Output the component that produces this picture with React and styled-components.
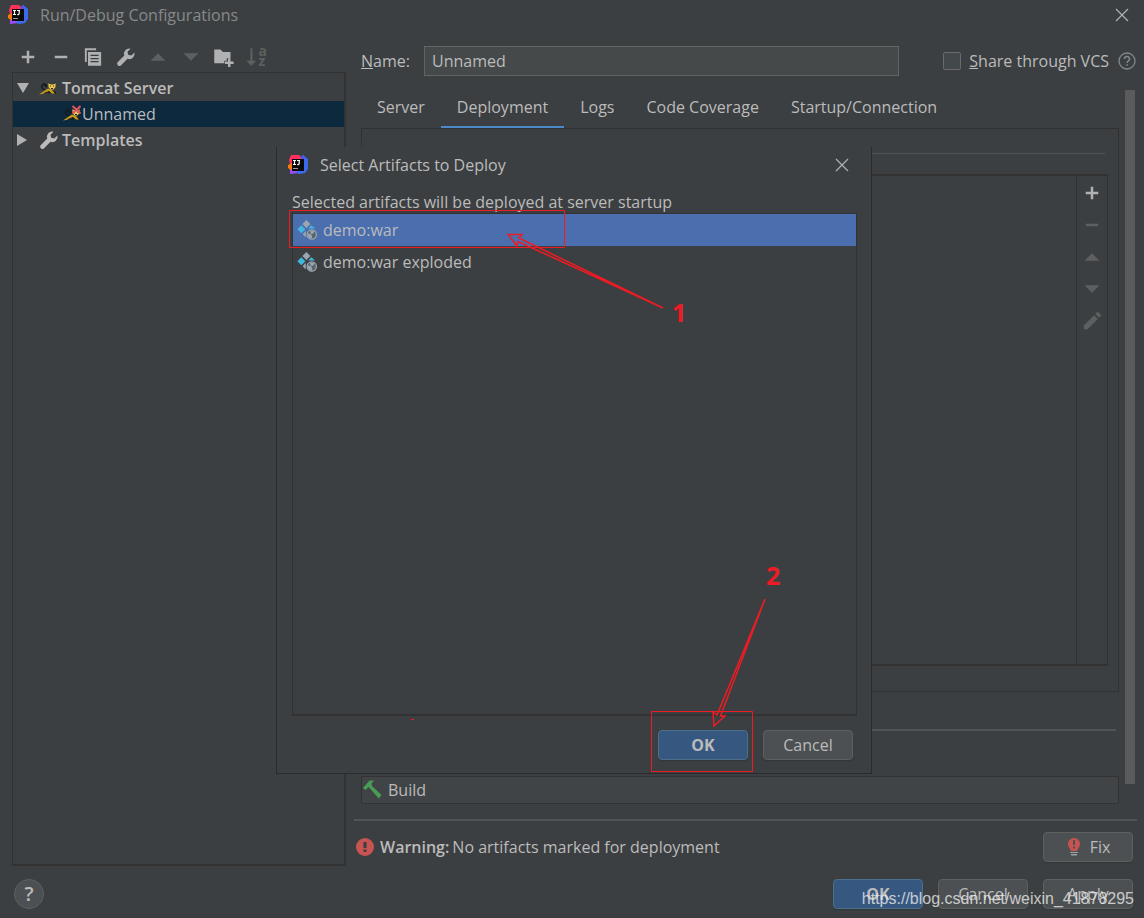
import React from "react";
import styled, { createGlobalStyle } from "styled-components";

const GlobalStyle = createGlobalStyle`
  * {
    box-sizing: border-box;
  }

  body {
    margin: 0;
    background: #3c3f41;
    color: #bbbbbb;
    font-family: "Open Sans", "Noto Sans", sans-serif;
    font-size: 16px;
    line-height: 22px;
  }

  b {
    font-weight: 600;
  }

  button,
  input {
    font: inherit;
    color: inherit;
  }

  svg {
    display: block;
    flex: none;
  }
`;

const Window = styled.div`
  position: relative;
  display: flex;
  flex-direction: column;
  min-height: 100vh;
  overflow: hidden;
`;

const TitleBar = styled.header`
  display: flex;
  align-items: center;
  height: ${(props) => (props.$dialog ? "36px" : "30px")};
  padding: 0 ${(props) => (props.$dialog ? "22px 0 11px" : "15px 0 8px")};
  gap: 12px;
  color: ${(props) => (props.$dialog ? "#bbbbbb" : "#87898a")};
`;

const Title = styled.h1`
  flex: 1;
  margin: 0;
  font-size: 16px;
  font-weight: 400;
`;

const IconButton = styled.button`
  display: flex;
  align-items: center;
  justify-content: center;
  padding: 0;
  border: none;
  background: none;
  color: #afb1b3;

  &:disabled {
    color: #5d5f60;
  }
`;

const Main = styled.main`
  flex: 1;
  display: grid;
  grid-template-columns: 334px minmax(0, 1fr);
  column-gap: 8px;
  padding-left: 12px;
`;

const Sidebar = styled.aside`
  display: flex;
  flex-direction: column;
  padding-top: 12px;
`;

const Toolbar = styled.div`
  display: flex;
  align-items: center;
  justify-content: space-between;
  height: 30px;
  padding: 0 80px 0 6px;
`;

const Tree = styled.ul`
  flex: 1;
  margin: 0;
  padding: 2px 0 0;
  list-style: none;
  border: 1px solid #323232;
  border-width: 1px 2px 2px 1px;
`;

const TreeRow = styled.li`
  display: flex;
  align-items: center;
  height: 26px;
  padding-left: ${(props) => (props.$child ? "50px" : "3px")};
  font-weight: ${(props) => (props.$child ? 400 : 600)};
  background: ${(props) => (props.$selected ? "#0d293e" : "none")};
`;

const Twisty = styled.span`
  width: 23px;
`;

const TreeIcon = styled.span`
  width: ${(props) => (props.$child ? "19px" : "23px")};
`;

const Content = styled.section`
  display: flex;
  flex-direction: column;
`;

const NameRow = styled.div`
  display: flex;
  align-items: center;
  height: 60px;
  padding: 2px 8px 0 7px;
`;

const NameLabel = styled.label`
  width: 63px;
`;

const NameInput = styled.input`
  flex: 1;
  min-width: 0;
  height: 30px;
  margin-right: 44px;
  padding: 0 7px;
  border: 1px solid #646464;
  background: #45494a;
  outline: none;
`;

const ShareLabel = styled.label`
  display: flex;
  align-items: center;
  gap: 8px;
  margin-right: 9px;
`;

const Checkbox = styled.input`
  appearance: none;
  width: 18px;
  height: 18px;
  margin: 0;
  border: 1px solid #6b6b6b;
  border-radius: 2px;
  background: #43494a;
`;

const Scroller = styled.div`
  flex: 1;
  display: flex;
  gap: 6px;
  padding: 0 9px 0 7px;
`;

const ScrollBody = styled.div`
  flex: 1;
  display: flex;
  flex-direction: column;
`;

const ScrollThumb = styled.div`
  width: 10px;
  margin: 0 0 20px;
  background: #595b5d;
`;

const Tabs = styled.nav`
  display: flex;
  height: 38px;
`;

const Tab = styled.button`
  height: 39px;
  padding: 0 16px 2px;
  border: none;
  border-bottom: 3px solid
    ${(props) => (props.$active ? "#4a88c7" : "transparent")};
  background: none;
`;

const Panel = styled.div`
  flex: 1;
  display: flex;
  flex-direction: column;
  padding: 24px 10px 25px;
  border: 1px solid #323232;
`;

const Rule = styled.hr`
  width: auto;
  height: ${(props) => (props.$thick ? "2px" : "1px")};
  margin: 0 3px 0 0;
  border: none;
  background: #515355;
`;

const ArtifactBox = styled.div`
  flex: 1;
  display: flex;
  justify-content: flex-end;
  margin-top: 20px;
  border: 1px solid #323232;
  border-width: 2px 1px 2px 1px;
`;

const ArtifactTools = styled.div`
  display: flex;
  flex-direction: column;
  width: 31px;
  padding-top: 1px;
  border-left: 1px solid #323232;

  ${IconButton} {
    height: 32px;
  }
`;

const BeforeLaunch = styled.div`
  padding: 37px 0 45px;
`;

const BuildRow = styled.div`
  display: flex;
  align-items: center;
  gap: 4px;
  height: 28px;
  border: 1px solid #323232;
  background: #414446;
`;

const Problem = styled.div`
  display: flex;
  align-items: center;
  margin: 15px 7px 0 0;
  padding: 11px 4px 4px 2px;
  border-top: 2px solid #515355;
`;

const ProblemText = styled.p`
  flex: 1;
  display: flex;
  gap: 3px;
  margin: 0 0 0 6px;
`;

const Button = styled.button`
  display: flex;
  align-items: center;
  justify-content: center;
  gap: 8px;
  width: 90px;
  height: 30px;
  padding: 0;
  border: 1px solid ${(props) => (props.$primary ? "#4c708c" : "#5e6060")};
  border-radius: 4px;
  background: ${(props) => (props.$primary ? "#365880" : "#4c5052")};
  font-weight: ${(props) => (props.$primary ? 700 : 400)};
  box-shadow: 0 1px 1px rgba(0, 0, 0, 0.15);
`;

const Footer = styled.footer`
  display: flex;
  align-items: center;
  justify-content: flex-end;
  gap: 15px;
  padding: 13px 11px 9px 14px;
`;

const HelpButton = styled.button`
  width: 30px;
  height: 30px;
  margin-right: auto;
  padding: 0;
  border: 1px solid #5e6060;
  border-radius: 50%;
  background: #4c5052;
  font-size: 20px;
  font-weight: 600;
`;

const Overlay = styled.div`
  position: absolute;
  inset: 0;
  display: grid;
  place-items: center;
  padding: 3px 0 0 4px;
`;

const Dialog = styled.div`
  position: relative;
  display: flex;
  flex-direction: column;
  width: 596px;
  height: 627px;
  border: 1px solid #2b2b2b;
  border-top: none;
  background: #3c3f41;
`;

const DialogBody = styled.div`
  flex: 1;
  display: flex;
  flex-direction: column;
  padding: 8px 14px 13px 15px;
`;

const List = styled.ul`
  flex: 1;
  margin: 0 0 14px;
  padding: 0;
  list-style: none;
  border: 1px solid #323232;
  border-bottom-width: 2px;
`;

const ListItem = styled.li`
  display: flex;
  align-items: center;
  gap: 6px;
  height: 32px;
  padding-left: 4px;
  background: ${(props) => (props.$selected ? "#4b6eaf" : "none")};
`;

const DialogButtons = styled.div`
  display: flex;
  justify-content: flex-end;
  gap: 15px;
  padding-right: 4px;
`;

const Marks = styled.svg`
  position: absolute;
  top: 0;
  left: 0;
  fill: none;
  stroke: #ed1c24;
  pointer-events: none;

  text {
    fill: #ed1c24;
    stroke: none;
    font-size: 25px;
    font-weight: 700;
  }
`;

const Watermark = styled.div`
  position: absolute;
  right: 10px;
  bottom: 8px;
  color: rgba(235, 235, 235, 0.8);
  font-family: "Liberation Sans", sans-serif;
  font-size: 16px;
  pointer-events: none;
`;

function Icon({ size = 20, children }) {
  return (
    <svg
      width={size}
      height={size}
      viewBox="0 0 16 16"
      fill="currentColor"
      overflow="visible"
    >
      {children}
    </svg>
  );
}

function IdeaLogo() {
  return (
    <svg width="20" height="20" viewBox="0 0 20 20">
      <path d="M3 0h8l3 3-4 13-7-1-1-6-1-4z" fill="#fe315d" />
      <path d="M0 10l4-2v8l-4-3z" fill="#f97a12" />
      <path d="M2 15l9-1v4l-5 .5-4 .5z" fill="#a24af7" />
      <path d="M13 2l2-2 5 4v10l-3 4-5 1-5-1 4-3z" fill="#3b6aea" />
      <path d="M13 2l2-2 2 1.500V4h-4z" fill="#4b57ef" />
      <rect x="4" y="4" width="12" height="12" fill="#0a0a0a" />
      <path
        d="M5 5.500h3M6.500 5.500v4M5 9.500h3M9 5.500h3M11.200 5.500v3q0 1.200-2 1"
        stroke="#fff"
        strokeWidth="1.200"
        fill="none"
      />
      <path d="M5 13h5v1H5z" fill="#999" />
    </svg>
  );
}

function CloseIcon() {
  return (
    <svg width="14" height="14" viewBox="0 0 14 14" stroke="currentColor">
      <path d="M1 1l12 12M13 1L1 13" strokeWidth="1.2" />
    </svg>
  );
}

const PlusIcon = () => (
  <Icon>
    <path d="M7 3h2v4h4v2H9v4H7V9H3V7h4z" />
  </Icon>
);

const MinusIcon = () => (
  <Icon>
    <path d="M3 7h10v2H3z" />
  </Icon>
);

const CopyIcon = () => (
  <Icon>
    <path d="M1.500 1h9v1.500H3V12H1.500z" />
    <path
      fillRule="evenodd"
      d="M4 4h10.500v11H4zM6 6.200v1h6.500v-1zM6 8.700v1h6.500v-1zM6 11.200v1h6.500v-1z"
    />
  </Icon>
);

const WrenchIcon = () => (
  <Icon>
    <path d="M14.700 4.300L12.300 6.700L9.700 6.200L9.200 3.700L11.600 1.300A4.200 4.200 0 0 0 6.600 6.800L1.300 12.100A1.600 1.600 0 0 0 1.300 14.300L1.700 14.700A1.600 1.600 0 0 0 3.900 14.700L9.200 9.400A4.200 4.200 0 0 0 14.700 4.300Z" />
  </Icon>
);

const UpIcon = () => (
  <Icon>
    <path d="M8 5l6 6H2z" />
  </Icon>
);

const DownIcon = () => (
  <Icon>
    <path d="M8 11l6-6H2z" />
  </Icon>
);

const FolderIcon = () => (
  <Icon>
    <path d="M1 2h5l2 2h6v5h-3v2H9v2H1z" />
    <path d="M12 9h2v2.500h2.500v2H14V16h-2v-2.500H9.500v-2H12z" />
  </Icon>
);

const SortIcon = () => (
  <Icon>
    <path d="M3.500 1h1.700v10h3L4.300 15 .3 11h3.200z" />
    <text x="10" y="7" fontSize="11" fontWeight="700">
      a
    </text>
    <text x="10" y="15" fontSize="11" fontWeight="700">
      z
    </text>
  </Icon>
);

const PencilIcon = () => (
  <Icon>
    <path d="M1.500 11.500L9.700 3.300L12.700 6.300L4.500 14.500H1.500z" />
    <path d="M10.700 2.300L12 1Q12.600.6 13.200 1L15 2.800Q15.400 3.400 15 4L13.700 5.300z" />
  </Icon>
);

function TomcatIcon({ broken }) {
  return (
    <svg width="18" height="18" viewBox="0 0 18 18">
      <path
        d="M6 11Q1 9 3.500 6T8 8M8 8l-3-2M13 12l4 2"
        stroke="#17191a"
        strokeWidth="1.400"
        fill="none"
      />
      <path d="M0 15.500L5 12 9 9.500l4 1.500 3 3.500h-3l-3-2-4 1.500L3 15z" fill="#c79a1b" />
      <path d="M5 14l5-2 2 2-2 .5-1-1-4 1z" fill="#17191a" />
      <path d="M9.500 4l2.500 1.500h2L16.500 4v4l-2 2.500h-3L9.500 8z" fill="#ecc94f" />
      <path
        d="M9.500 3l2 2M17 3l-2 2M11 7h1M14 7h1M12 9.500h2"
        stroke="#2b2a1c"
        strokeWidth="1"
      />
      {broken && (
        <path
          d="M9.500 1l8 7.500M17.500 1l-8 7.500"
          stroke="#e05560"
          strokeWidth="2"
        />
      )}
    </svg>
  );
}

function ArtifactIcon() {
  return (
    <Icon>
      <path d="M7.500 0l3.200 3.200-3.200 3.200-3.200-3.200z" fill="#9aa7b0" />
      <path d="M3.500 4.200l3.200 3.200-3.200 3.200L.3 7.400z" fill="#40b6e0" />
      <path d="M11.500 4.200l3 2.600H8.900z" fill="#40b6e0" />
      <path d="M7 8.500L4.500 11.300 7 14z" fill="#9aa7b0" />
      <circle cx="11.800" cy="11.600" r="3.700" stroke="#9aa7b0" fill="#5a636b" />
      <path
        d="M8.300 10.500l2.500.7 1.400 1.600-.6 2.200-2.400-1zM10.500 8.300l3.700.7-1.300 1.700-1.900.5z"
        fill="#9aa7b0"
      />
    </Icon>
  );
}

function HammerIcon() {
  return (
    <svg width="22" height="20" viewBox="0 0 22 20" fill="#499c54">
      <path d="M1 8l6.500-7.500H12L9.500 3.500 10 6l9.500 9-2.700 3.500L8 8.500 6.500 7 3.500 10z" />
    </svg>
  );
}

function ErrorIcon() {
  return (
    <svg width="18" height="18" viewBox="0 0 18 18">
      <circle cx="9" cy="9" r="9" fill="#c75450" />
      <path d="M7.500 4h3v6h-3zM7.500 11.500h3v2.500h-3z" fill="#3c3f41" />
    </svg>
  );
}

function BulbIcon() {
  return (
    <svg width="16" height="20" viewBox="0 0 16 20">
      <path
        d="M8 1a6 6 0 0 1 6 6c0 3-2 4-3 7H5C4 11 2 10 2 7a6 6 0 0 1 6-6z"
        fill="#c75450"
      />
      <path d="M7 3h2v5H7zM7 9.500h2v2H7z" fill="#4c5052" />
      <path d="M4 15h8v1H4zM5 17h6v1.500H5z" fill="#9aa0a3" />
    </svg>
  );
}

function HintIcon() {
  return (
    <svg width="18" height="18" viewBox="0 0 18 18" fill="none">
      <circle cx="9" cy="9" r="8" stroke="#7f8b91" strokeWidth="1.300" />
      <path
        d="M6.500 7a2.500 2.400 0 1 1 3.700 2C9.300 9.600 9 9.900 9 11M9 12.300v1.500"
        stroke="#7f8b91"
        strokeWidth="1.500"
      />
    </svg>
  );
}

const tabs = [
  "Server",
  "Deployment",
  "Logs",
  "Code Coverage",
  "Startup/Connection",
];

const artifacts = ["demo:war", "demo:war exploded"];

function ConfigTree() {
  return (
    <Sidebar>
      <Toolbar>
        <IconButton aria-label="Add"><PlusIcon /></IconButton>
        <IconButton aria-label="Remove"><MinusIcon /></IconButton>
        <IconButton aria-label="Copy"><CopyIcon /></IconButton>
        <IconButton aria-label="Edit templates"><WrenchIcon /></IconButton>
        <IconButton aria-label="Move up" disabled><UpIcon /></IconButton>
        <IconButton aria-label="Move down" disabled><DownIcon /></IconButton>
        <IconButton aria-label="New folder"><FolderIcon /></IconButton>
        <IconButton aria-label="Sort" disabled><SortIcon /></IconButton>
      </Toolbar>
      <Tree>
        <TreeRow>
          <Twisty>
            <svg width="14" height="14" fill="#afb1b3">
              <path d="M1 2h12L7 12z" />
            </svg>
          </Twisty>
          <TreeIcon><TomcatIcon /></TreeIcon>
          Tomcat Server
        </TreeRow>
        <TreeRow $child $selected>
          <TreeIcon $child><TomcatIcon broken /></TreeIcon>
          Unnamed
        </TreeRow>
        <TreeRow>
          <Twisty>
            <svg width="14" height="14" fill="#afb1b3">
              <path d="M1 1v12l10-6z" />
            </svg>
          </Twisty>
          <TreeIcon><WrenchIcon /></TreeIcon>
          Templates
        </TreeRow>
      </Tree>
    </Sidebar>
  );
}

function ArtifactDialog() {
  return (
    <Overlay>
      <Dialog role="dialog" aria-label="Select Artifacts to Deploy">
        <TitleBar $dialog>
          <IdeaLogo />
          <Title as="h2">Select Artifacts to Deploy</Title>
          <IconButton aria-label="Close dialog"><CloseIcon /></IconButton>
        </TitleBar>
        <DialogBody>
          <div>Selected artifacts will be deployed at server startup</div>
          <List>
            {artifacts.map((name, index) => (
              <ListItem key={name} $selected={index === 0}>
                <ArtifactIcon />
                {name}
              </ListItem>
            ))}
          </List>
          <DialogButtons>
            <Button $primary>OK</Button>
            <Button>Cancel</Button>
          </DialogButtons>
        </DialogBody>
        <Marks width="594" height="627" viewBox="277 147 594 627">
          <path d="M289.500 210.500h275v37h-275zM651.500 711.500h101v60h-101z" />
          <path
            d="M508 234.500h14l-3 3.500L663 308 518 241.500l-1 4.500zM714 726l-1-14 4 3L765 599 720.500 716h4.500z"
            strokeWidth="1.500"
          />
          <path d="M411 719.500h3" />
          <text x="672" y="322">1</text>
          <text x="766" y="585">2</text>
        </Marks>
      </Dialog>
    </Overlay>
  );
}

function App() {
  return (
    <Window>
      <GlobalStyle />
      <TitleBar>
        <IdeaLogo />
        <Title>Run/Debug Configurations</Title>
        <IconButton aria-label="Close"><CloseIcon /></IconButton>
      </TitleBar>
      <Main>
        <ConfigTree />
        <Content>
          <NameRow>
            <NameLabel htmlFor="name"><u>N</u>ame:</NameLabel>
            <NameInput id="name" defaultValue="Unnamed" />
            <ShareLabel>
              <Checkbox type="checkbox" />
              <span><u>S</u>hare through VCS</span>
            </ShareLabel>
            <HintIcon />
          </NameRow>
          <Scroller>
            <ScrollBody>
              <Tabs>
                {tabs.map((tab) => (
                  <Tab key={tab} $active={tab === "Deployment"}>
                    {tab}
                  </Tab>
                ))}
              </Tabs>
              <Panel>
                <Rule />
                <ArtifactBox>
                  <ArtifactTools>
                    <IconButton aria-label="Add artifact"><PlusIcon /></IconButton>
                    <IconButton aria-label="Remove artifact" disabled><MinusIcon /></IconButton>
                    <IconButton aria-label="Artifact up" disabled><UpIcon /></IconButton>
                    <IconButton aria-label="Artifact down" disabled><DownIcon /></IconButton>
                    <IconButton aria-label="Edit artifact" disabled><PencilIcon /></IconButton>
                  </ArtifactTools>
                </ArtifactBox>
              </Panel>
              <BeforeLaunch>
                <Rule $thick />
              </BeforeLaunch>
              <BuildRow>
                <HammerIcon />
                Build
              </BuildRow>
            </ScrollBody>
            <ScrollThumb />
          </Scroller>
          <Problem>
            <ErrorIcon />
            <ProblemText>
              <b>Warning:</b>
              <span>No artifacts marked for deployment</span>
            </ProblemText>
            <Button><BulbIcon />Fix</Button>
          </Problem>
        </Content>
      </Main>
      <Footer>
        <HelpButton>?</HelpButton>
        <Button $primary>OK</Button>
        <Button>Cancel</Button>
        <Button>Apply</Button>
      </Footer>
      <ArtifactDialog />
      <Watermark>https://blog.csdn.net/weixin_41878295</Watermark>
    </Window>
  );
}

export default App;
